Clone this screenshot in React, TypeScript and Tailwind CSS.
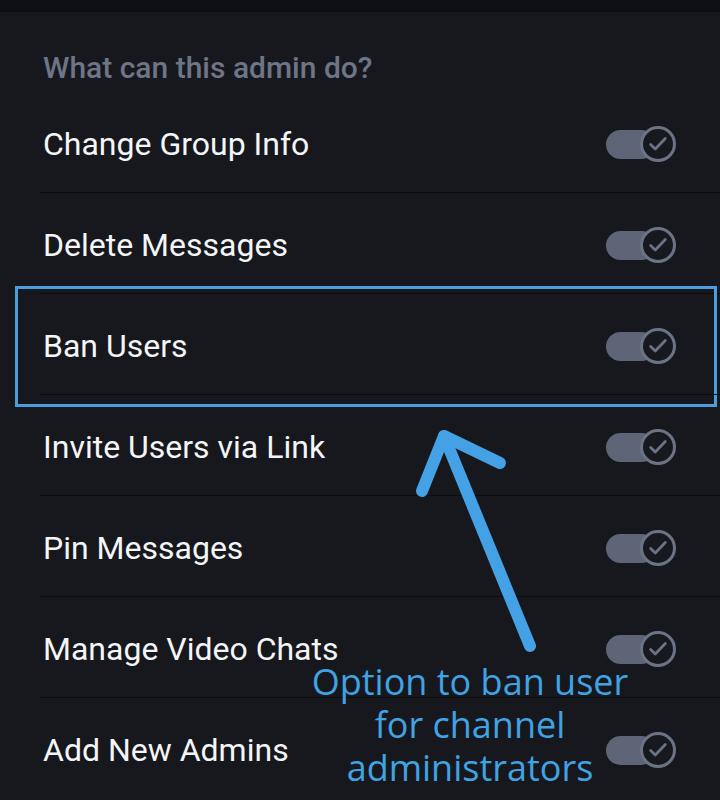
import React from "react"

const rows = [
  "Change Group Info",
  "Delete Messages",
  "Ban Users",
  "Invite Users via Link",
  "Pin Messages",
  "Manage Video Chats",
  "Add New Admins",
]

function Toggle() {
  return (
    <div className="flex items-center">
      <div className="h-[29px] w-[50px] rounded-full bg-[#5d6577]" />
      <div className="-ml-[16px] flex h-[36px] w-[36px] items-center justify-center rounded-full border-[3px] border-[#6b7385] bg-[#18191e]">
        <svg width="22" height="22" viewBox="0 0 24 24" fill="none">
          <path d="M4 12.5l5 5L20 6" stroke="#6b7385" strokeWidth="3" strokeLinecap="round" strokeLinejoin="round" />
        </svg>
      </div>
    </div>
  )
}

export default function App() {
  return (
    <div className="relative h-[800px] w-[720px] overflow-hidden bg-[#17181d] font-['Roboto',sans-serif]">
      <div className="h-[12px] bg-[#0e0f12]" />
      <div className="flex h-[80px] items-center pl-[43px] pt-[32px] text-[30px] font-medium leading-none text-[#6d7587]">
        What can this admin do?
      </div>
      {rows.map((label, i) => (
        <div key={label} className="relative">
          {i > 0 && <div className="ml-[40px] h-[1px] bg-[#0b0c0e]" />}
          <div className="flex h-[100px] items-center justify-between pl-[43px] pr-[44px] pt-[4px]">
            <span className="text-[32px] text-[#f4f5f7]">{label}</span>
            <Toggle />
          </div>
          {label === "Ban Users" && (
            <div className="absolute -bottom-[13px] -top-[7px] left-[15px] right-[3px] border-[3px] border-[#4a9ee0]" />
          )}
        </div>
      ))}

      <svg className="absolute left-0 top-0" width="720" height="800">
        <g stroke="#44a1e6" strokeWidth="12" strokeLinecap="round" strokeLinejoin="round" fill="none">
          <path d="M530 646 L444 436" />
          <path d="M422 491 L444 436 L500 463" />
        </g>
      </svg>

      <div className="absolute left-[290px] top-[660px] w-[360px] text-center font-['Open_Sans',sans-serif] text-[36px] leading-[43px] text-[#40a3e3]">
        Option to ban user
        <br />
        for channel
        <br />
        administrators
      </div>
    </div>
  )
}
